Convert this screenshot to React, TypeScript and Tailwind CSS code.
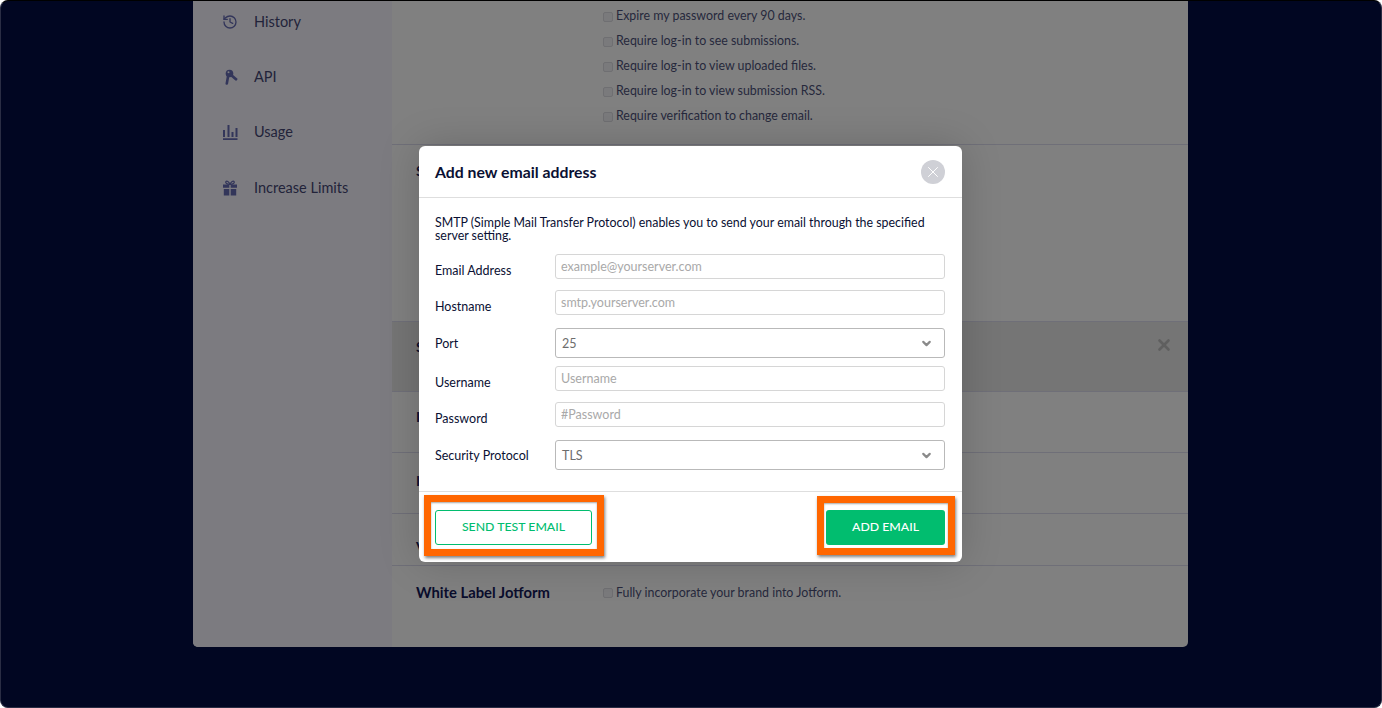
import { ChevronDown, History, X } from "lucide-react";

const sideItems = ["History", "API", "Usage", "Increase Limits"];

const securityOptions = [
  "Expire my password every 90 days.",
  "Require log-in to see submissions.",
  "Require log-in to view uploaded files.",
  "Require log-in to view submission RSS.",
  "Require verification to change email.",
];

function KeysIcon() {
  return (
    <svg viewBox="0 0 16 16" className="size-[16px] text-[#33365a]" fill="none" stroke="currentColor" aria-hidden="true">
      <circle cx="7.500" cy="4.500" r="3.800" fill="currentColor" stroke="none" />
      <circle cx="6.500" cy="3.300" r="1" fill="#7c7b80" stroke="none" />
      <path d="M6.300 6 4.800 14.500" strokeWidth="2.600" strokeLinecap="round" />
      <path d="M8.500 5.500l5.500 4.700" strokeWidth="2.800" strokeLinecap="round" />
    </svg>
  );
}

function BarsIcon() {
  return (
    <svg viewBox="0 0 16 16" className="size-[16px] text-[#33365a]" fill="currentColor" aria-hidden="true">
      <path d="M1 6h2v7H1zM5.500 1h2v12h-2zM9.500 8h2v5h-2zM13.500 4h2v9h-2zM1 14.300h14.500V16H1z" />
    </svg>
  );
}

function GiftIcon() {
  return (
    <svg viewBox="0 0 16 16" className="size-[16px] text-[#33365a]" fill="currentColor" aria-hidden="true">
      <path d="M1 4.500h6.300v3.200H1zM8.700 4.500H15v3.200H8.700zM1.800 8.900h5.500V15.500H1.800zM8.700 8.900h5.500V15.500H8.700z" />
      <path fill="none" stroke="currentColor" strokeWidth="1.200" d="M8 4.300C6.800 1.500 4.800.7 4 1.500c-.9 1 .2 2.800 4 2.800zm0 0c1.200-2.800 3.200-3.600 4-2.800.9 1-.2 2.800-4 2.800z" />
    </svg>
  );
}

function sideIcon(label: string) {
  if (label === "History") return <History className="size-[16px] text-[#33365a]" strokeWidth={2} />;
  if (label === "API") return <KeysIcon />;
  if (label === "Usage") return <BarsIcon />;
  return <GiftIcon />;
}

function Check() {
  return <span className="size-[10px] shrink-0 rounded-[2px] border border-[#6f6f72] bg-[#7a7a7c]" />;
}

function TextField({ label, placeholder, className }: { label: string; placeholder: string; className: string }) {
  return (
    <div className={`flex items-start ${className}`}>
      <label className="w-[120px] pt-[9px] text-[12.500px] leading-[16px] text-[#0a1033]">{label}</label>
      <input
        placeholder={placeholder}
        className="h-[25px] w-[390px] rounded-[3px] border border-[#d6d6d6] bg-white pl-[5px] text-[12.500px] text-[#333] outline-none placeholder:text-[#a9a9a9]"
      />
    </div>
  );
}

function SelectField({ label, value, className }: { label: string; value: string; className: string }) {
  return (
    <div className={`flex items-center ${className}`}>
      <span className="w-[120px] pt-[1px] text-[12.500px] leading-[16px] text-[#0a1033]">{label}</span>
      <div className="flex h-[30px] w-[390px] items-center justify-between rounded-[3px] border border-[#b9b9b9] bg-white pl-[6px] pr-[11px] text-[12.500px] text-[#6d6d6d]">
        <span className="pt-[2px]">{value}</span>
        <ChevronDown className="size-[13px] text-[#8a8a8a]" strokeWidth={4} />
      </div>
    </div>
  );
}

export default function App() {
  return (
    <div
      className="relative h-[708px] w-[1382px] overflow-hidden rounded-[8px] border border-t-black border-x-[#2a2d44] border-b-[#2a2d44] bg-[#010622]"
      style={{ fontFamily: "Lato, 'Noto Sans', sans-serif" }}
    >
      <div className="ml-[192px] flex h-[646px] w-[995px] overflow-hidden rounded-b-[5px] bg-[#808080]">
        {/* sidebar */}
        <aside className="w-[199px] shrink-0 bg-[#7c7b80]">
          <nav className="-mt-[7px] pl-[29px]">
            {sideItems.map((item) => (
              <div key={item} className="flex h-[55.300px] items-center gap-[16px] text-[14.500px] text-[#22233a]">
                {sideIcon(item)}
                <span>{item}</span>
              </div>
            ))}
          </nav>
        </aside>

        {/* settings rows */}
        <main className="flex-1 text-[12.400px] text-[#26283c]">
          <section className="h-[144px] border-b border-[#6f6f78] pl-[211px] pt-[3px]">
            {securityOptions.map((opt) => (
              <div key={opt} className="flex h-[25px] items-center gap-[3px]">
                <Check />
                <span>{opt}</span>
              </div>
            ))}
          </section>
          <section className="h-[177px] border-b border-[#6f6f78] pl-[24px] pt-[15px] text-[14px] font-bold text-[#0a0d2c]">S</section>
          <section className="flex h-[70px] items-start justify-between border-b border-[#6f6f78] bg-[#757575] pl-[24px] pr-[15px] pt-[14px] text-[14px] font-bold text-[#0a0d2c]">
            <span>S</span>
            <X className="size-[18px] text-[#5f5f5f]" strokeWidth={3.500} />
          </section>
          <section className="h-[61px] border-b border-[#6f6f78] pl-[24px] pt-[14px] text-[14px] font-bold text-[#0a0d2c]">I</section>
          <section className="h-[61px] border-b border-[#6f6f78] pl-[24px] pt-[17px] text-[14px] font-bold text-[#0a0d2c]">I</section>
          <section className="h-[52px] border-b border-[#6f6f78] pl-[24px] pt-[22px] text-[14px] font-bold text-[#0a0d2c]">V</section>
          <section className="flex h-[54px] items-center">
            <span className="-mt-[2px] w-[211px] pl-[24px] text-[14.800px] font-bold text-[#0a0d2c]">White Label Jotform</span>
            <div className="flex items-center gap-[3px]">
              <Check />
              <span>Fully incorporate your brand into Jotform.</span>
            </div>
          </section>
        </main>
      </div>

      {/* modal */}
      <div className="absolute left-[418px] top-[145px] w-[543px] rounded-[6px] bg-white shadow-[0_0_40px_rgba(0,0,0,0.18)]">
        <header className="flex h-[52px] items-center justify-between border-b border-[#dedede] pl-[16px] pr-[17px]">
          <h2 className="text-[15.800px] font-bold text-[#0a1033]">Add new email address</h2>
          <button type="button" aria-label="Close" className="flex size-[24px] items-center justify-center rounded-full bg-[#cfd0d6] text-white">
            <X className="size-[18px]" strokeWidth={1.300} />
          </button>
        </header>

        <div className="pl-[16px] pr-[17px] pt-[18px]">
          <p className="mb-[12px] text-[12.400px] leading-[13px] text-[#0a1033]">
            SMTP (Simple Mail Transfer Protocol) enables you to send your email through the specified server setting.
          </p>
          <TextField label="Email Address" placeholder="example@yourserver.com" className="mb-[11px]" />
          <TextField label="Hostname" placeholder="smtp.yourserver.com" className="mb-[13px]" />
          <SelectField label="Port" value="25" className="mb-[8px]" />
          <TextField label="Username" placeholder="Username" className="mb-[11px]" />
          <TextField label="Password" placeholder="#Password" className="mb-[13px]" />
          <SelectField label="Security Protocol" value="TLS" className="" />
        </div>

        <footer className="mt-[21px] flex h-[71px] items-center justify-between border-t border-[#dedede] pl-[16px] pr-[17px]">
          <button type="button" className="h-[35px] w-[157px] rounded-[3px] border border-[#01bd6f] bg-white text-[12.300px] font-medium text-[#01bd6f]">
            SEND TEST EMAIL
          </button>
          <button type="button" className="h-[35px] w-[119px] rounded-[3px] bg-[#01bd6f] text-[12.300px] font-medium text-white">
            ADD EMAIL
          </button>
        </footer>

        {/* orange callouts */}
        <div className="absolute left-[5px] top-[349px] h-[61px] w-[180px] border-[7px] border-[#ff6600] shadow-[1px_2px_3px_rgba(0,0,0,0.5),inset_0_1px_2px_rgba(0,0,0,0.35)]" />
        <div className="absolute left-[398px] top-[350px] h-[59px] w-[138px] border-[7px] border-[#ff6600] shadow-[1px_2px_3px_rgba(0,0,0,0.5),inset_0_1px_2px_rgba(0,0,0,0.35)]" />
      </div>
    </div>
  );
}
